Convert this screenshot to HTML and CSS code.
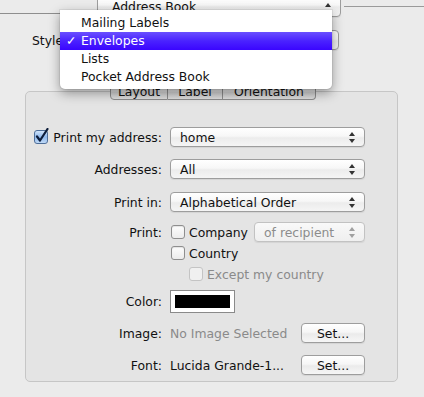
FILE: index.html
```html
<!DOCTYPE html>
<html lang="en">
<head>
<meta charset="utf-8">
<title>Print - Address Book</title>
<link rel="stylesheet" href="styles.css">
</head>
<body>
	<div class="top">
		<div class="rule rule-left"></div>
		<div class="popup book">Address Book
			<svg class="arrow-up" width="6" height="4" viewBox="0 0 6 4"><path d="M3 0 L6 4 L0 4 Z" fill="#333"/></svg>
		</div>
		<div class="rule rule-right"></div>
	</div>

	<!-- the Style popup sits under the open menu -->
	<div class="style-row">
		<span class="style-label">Style:</span>
		<div class="popup style-popup"></div>
	</div>

	<div class="tabs">
		<div class="tab tab-layout">Layout</div>
		<div class="tab tab-label">Label</div>
		<div class="tab tab-orient">Orientation</div>
	</div>

	<div class="panel">
		<!-- print my address -->
		<div class="row r1">
			<div class="lbl">
				<svg class="check-on" width="16" height="16" viewBox="0 0 16 16">
					<defs>
						<linearGradient id="cb" x1="0" y1="0" x2="0" y2="1">
							<stop offset="0" stop-color="#d7e8fb"/>
							<stop offset="0.5" stop-color="#8fb8ec"/>
							<stop offset="1" stop-color="#c4dcf7"/>
						</linearGradient>
					</defs>
					<rect x="0.5" y="2.5" width="13" height="13" rx="2.5" fill="url(#cb)" stroke="#4f6f99"/>
					<path d="M3 8.5 L6 12.5 L13.5 1" fill="none" stroke="#0c1c3a" stroke-width="2.2" stroke-linecap="round" stroke-linejoin="round"/>
				</svg>
				Print my address:
			</div>
			<div class="popup ctl">home
				<svg class="arrows" width="6" height="11" viewBox="0 0 6 11"><path d="M3 0 L6 4 L0 4 Z M0 7 L6 7 L3 11 Z" fill="#333"/></svg>
			</div>
		</div>

		<div class="row r2">
			<div class="lbl">Addresses:</div>
			<div class="popup ctl">All
				<svg class="arrows" width="6" height="11" viewBox="0 0 6 11"><path d="M3 0 L6 4 L0 4 Z M0 7 L6 7 L3 11 Z" fill="#333"/></svg>
			</div>
		</div>

		<div class="row r3">
			<div class="lbl">Print in:</div>
			<div class="popup ctl">Alphabetical Order
				<svg class="arrows" width="6" height="11" viewBox="0 0 6 11"><path d="M3 0 L6 4 L0 4 Z M0 7 L6 7 L3 11 Z" fill="#333"/></svg>
			</div>
		</div>

		<div class="row r4">
			<div class="lbl">Print:</div>
			<div class="ctl-free">
				<span class="box"></span>Company
				<div class="popup off recip">of recipient
					<svg class="arrows" width="6" height="11" viewBox="0 0 6 11"><path d="M3 0 L6 4 L0 4 Z M0 7 L6 7 L3 11 Z" fill="#a0a0a0"/></svg>
				</div>
			</div>
		</div>

		<div class="row r5">
			<div class="lbl"></div>
			<div class="ctl-free"><span class="box"></span>Country</div>
		</div>

		<div class="row r6">
			<div class="lbl"></div>
			<div class="ctl-free indent"><span class="box box-off"></span><span class="dim">Except my country</span></div>
		</div>

		<div class="row r7">
			<div class="lbl">Color:</div>
			<div class="well"><span class="swatch"></span></div>
		</div>

		<div class="row r8">
			<div class="lbl">Image:</div>
			<div class="ctl-free wide"><span class="dim">No Image Selected</span><button class="btn">Set...</button></div>
		</div>

		<div class="row r9">
			<div class="lbl">Font:</div>
			<div class="ctl-free wide"><span>Lucida Grande-1...</span><button class="btn">Set...</button></div>
		</div>
	</div>

	<ul class="menu">
		<li>Mailing Labels</li>
		<li class="on"><span class="tick">&#10003;</span>Envelopes</li>
		<li>Lists</li>
		<li>Pocket Address Book</li>
	</ul>
</body>
</html>
```

FILE: styles.css
```css
* {
	margin: 0;
	padding: 0;
	box-sizing: border-box;
}

body {
	position: relative;
	width: 424px;
	height: 397px;
	overflow: hidden;
	background: #ebebeb;
	font: 12.4px "DejaVu Sans", sans-serif;
	color: #111;
}

/* top strip with the Address Book popup */
.top {
	display: flex;
	align-items: flex-start;
	height: 17px;
}

.rule-left {
	width: 90px;
	height: 14px;
	margin-right: 7px;
	border-bottom: 1px solid #8e8e8e;
}

.rule-right {
	flex: 1;
	height: 7px;
	margin-left: 3px;
	border-bottom: 1px solid #9a9a9a;
}

/* popup buttons */
.popup {
	display: flex;
	align-items: center;
	height: 20px;
	padding: 0 9px 0 9px;
	background: linear-gradient(#ffffff, #f7f7f7 45%, #ececec 55%, #f5f5f5);
	border: 1px solid #9d9d9d;
	border-radius: 4px;
	box-shadow: 0 1px 1px rgba(0, 0, 0, 0.07);
	white-space: nowrap;
}

.popup .arrows {
	margin-left: auto;
}

.popup.off {
	color: #8c8c8c;
	border-color: #c2c2c2;
	background: linear-gradient(#f9f9f9, #efefef);
}

.book {
	width: 244px;
	height: 22px;
	margin-top: -5px;
	padding-left: 14px;
}

.arrow-up {
	margin-left: auto;
	margin-top: -2px;
}

.style-row {
	display: flex;
	align-items: center;
	height: 20px;
	margin-top: 13px;
	padding-left: 32px;
}

.style-popup {
	width: 243px;
	margin-left: auto;
	margin-right: 85px;
}

/* tabs */
.tabs {
	position: relative;
	z-index: 1;
	display: flex;
	height: 17px;
	margin: 33px 0 0 110px;
}

.tab {
	height: 17px;
	line-height: 15px;
	text-align: center;
	border: 1px solid #8c8c8c;
	border-left: none;
	background: linear-gradient(#f4f4f4, #dcdcdc 50%, #d2d2d2 51%, #dedede);
}

.tab-layout {
	width: 58px;
	border-left: 1px solid #8c8c8c;
	border-radius: 4px 0 0 4px;
}

.tab-label {
	width: 55px;
}

.tab-orient {
	width: 93px;
	border-radius: 0 4px 4px 0;
}

/* group box */
.panel {
	height: 291px;
	margin: -9px 26px 0 25px;
	padding-top: 35px;
	background: #e4e4e4;
	border: 1px solid #c6c6c6;
	border-radius: 5px;
}

.row {
	display: flex;
	align-items: center;
	height: 20px;
}

.lbl {
	display: flex;
	align-items: center;
	justify-content: flex-end;
	width: 136px;
	margin-right: 8px;
	white-space: nowrap;
}

.check-on {
	margin: -3px 3px 0 0;
}

.ctl {
	width: 195px;
}

.ctl-free {
	display: flex;
	align-items: center;
	width: 195px;
	padding-left: 1px;
}

.ctl-free.indent {
	padding-left: 19px;
}

.ctl-free.wide {
	padding-left: 0;
}

.r2 { margin-top: 12px; }
.r3 { margin-top: 13px; }
.r4 { margin-top: 10px; }
.r5 { margin-top: 3px; height: 16px; }
.r6 { margin-top: 5px; height: 16px; }
.r7 { margin-top: 8px; height: 23px; }
.r8 { margin-top: 10px; }
.r9 { margin-top: 12px; }

.box {
	width: 14px;
	height: 14px;
	margin-right: 4px;
	border: 1px solid #8e8e8e;
	border-radius: 3px;
	background: linear-gradient(#fdfdfd, #ececec);
	box-shadow: inset 0 1px 1px rgba(0, 0, 0, 0.1);
}

.box-off {
	border-color: #c4c4c4;
	background: #f0f0f0;
	box-shadow: none;
}

.dim {
	color: #8a8a8a;
}

.recip {
	width: 111px;
	margin-left: auto;
}

.well {
	width: 65px;
	height: 23px;
	padding: 4px;
	border: 1px solid #8a8a8a;
	background: #fff;
}

.swatch {
	display: block;
	height: 100%;
	background: #000;
}

.btn {
	width: 64px;
	height: 20px;
	margin-left: auto;
	font: inherit;
	color: #111;
	border: 1px solid #9d9d9d;
	border-radius: 4px;
	background: linear-gradient(#ffffff, #f6f6f6 45%, #ebebeb 55%, #f6f6f6);
	box-shadow: 0 1px 1px rgba(0, 0, 0, 0.07);
}

/* open popup menu */
.menu {
	position: absolute;
	left: 60px;
	top: 10px;
	z-index: 2;
	width: 272px;
	padding: 4px 0 3px;
	list-style: none;
	background: #fff;
	border-radius: 0 0 5px 5px;
	box-shadow: 0 4px 12px rgba(0, 0, 0, 0.38), 0 0 0 1px rgba(0, 0, 0, 0.06);
}

.menu li {
	position: relative;
	height: 18px;
	line-height: 18px;
	padding-left: 21px;
	white-space: nowrap;
}

.menu .on {
	color: #fff;
	background: linear-gradient(#6a50ff, #4a22ff 50%, #3a05ff);
}

.menu .tick {
	position: absolute;
	left: 6px;
	font-weight: bold;
}
```
